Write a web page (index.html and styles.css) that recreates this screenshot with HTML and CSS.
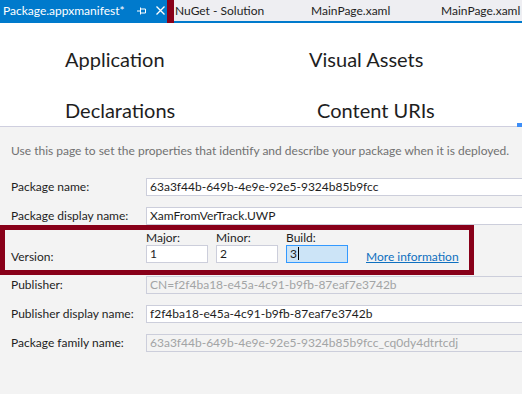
FILE: index.html
```html
<!DOCTYPE html>
<html lang="en">
<head>
  <meta charset="UTF-8" />
  <meta name="viewport" content="width=device-width, initial-scale=1.0"/>
  <title>Package.appxmanifest</title>
  <link rel="stylesheet" href="styles.css">
</head>
<body>
  <div class="page">
    <div class="tabbar">
      <div class="tab tab-active">
        <span class="tab-title">Package.appxmanifest*</span>
        <svg class="pin" width="9" height="8" viewBox="0 0 9 8">
          <path d="M0 4H3M3.5 0.5V7.5M3.5 2H8.5V6H3.5" fill="none" stroke="#fff" stroke-width="1"/>
        </svg>
        <svg class="close" width="9" height="9" viewBox="0 0 9 9">
          <path d="M0.5 0.5L8.5 8.5M8.5 0.5L0.5 8.5" stroke="#fff" stroke-width="1.3"/>
        </svg>
      </div>
      <div class="tab tab-nuget">NuGet - Solution</div>
      <div class="tab">MainPage.xaml</div>
      <div class="tab">MainPage.xaml</div>
    </div>
    <div class="mark-tab"></div>

    <div class="pivot">
      <div class="pivot-grid">
        <span>Application</span>
        <span>Visual Assets</span>
        <span>Declarations</span>
        <span class="pivot-shift">Content URIs</span>
      </div>
      <div class="pivot-dot"></div>
    </div>

    <div class="content">
      <p class="intro">Use this page to set the properties that identify and describe your package when it is deployed.</p>

      <div class="row">
        <label>Package name:</label>
        <div class="box">63a3f44b-649b-4e9e-92e5-9324b85b9fcc</div>
      </div>
      <div class="row row-tight">
        <label>Package display name:</label>
        <div class="box">XamFromVerTrack.UWP</div>
      </div>

      <div class="row version">
        <label class="version-label">Version:</label>
        <div class="part">
          <span class="part-label">Major:</span>
          <div class="box box-small">1</div>
        </div>
        <div class="part">
          <span class="part-label">Minor:</span>
          <div class="box box-small">2</div>
        </div>
        <div class="part">
          <span class="part-label">Build:</span>
          <div class="box box-small box-focus">3<span class="caret"></span></div>
        </div>
        <a class="more" href="#">More information</a>
      </div>

      <div class="row">
        <label>Publisher:</label>
        <div class="box box-disabled">CN=f2f4ba18-e45a-4c91-b9fb-87eaf7e3742b</div>
      </div>
      <div class="row">
        <label>Publisher display name:</label>
        <div class="box">f2f4ba18-e45a-4c91-b9fb-87eaf7e3742b</div>
      </div>
      <div class="row">
        <label>Package family name:</label>
        <div class="box box-disabled">63a3f44b-649b-4e9e-92e5-9324b85b9fcc_cq0dy4dtrtcdj</div>
      </div>
    </div>
  </div>
</body>
</html>
```

FILE: styles.css
```css
body { margin: 0; font-family: Lato, sans-serif; color: #1e1e1e; background: #f3f3f3; overflow: hidden; }
.page { position: relative; height: 394px; overflow: hidden; }

.tabbar { display: flex; height: 21px; background: #eeeef2; border-bottom: 2px solid #007acc; font-size: 12px; line-height: 21px; white-space: nowrap; overflow: hidden; }
.tab { flex: none; width: 130px; padding-left: 25px; box-sizing: border-box; }
.tab-active { display: flex; align-items: center; width: 167px; padding-left: 3px; background: #007acc; color: #fff; }
.tab-nuget { width: 119px; padding-left: 8px; }
.pin { margin-left: 12px; }
.close { margin-left: 10px; }
.mark-tab { position: absolute; left: -10px; top: -10px; width: 184px; height: 40px; border: 7px solid #880019; box-sizing: border-box; }

.pivot { position: relative; background: #fff; padding: 24px 0 4px 65px; border-bottom: 1px solid #cfcfdf; font-size: 20px; line-height: 24px; }
.pivot-grid { display: grid; grid-template-columns: 244px auto; row-gap: 27px; }
.pivot-shift { padding-left: 8px; }
.pivot-dot { position: absolute; right: 0; bottom: -1px; width: 5px; height: 4px; background: #3e8ef7; }

.content { padding-top: 16px; font-size: 12px; }
.intro { margin: 0 0 19px; padding-left: 11px; line-height: 16px; color: #717171; }

.row { display: flex; align-items: center; height: 18px; margin-bottom: 11px; padding-left: 11px; line-height: 18px; white-space: nowrap; }
.row label { flex: none; width: 135px; }
.row-tight { margin-bottom: 0; }

.box { flex: none; width: 400px; height: 18px; box-sizing: border-box; padding: 0 3px; border: 1px solid #cccedb; background: #fff; line-height: 16px; }
.box-disabled { background: #f3f3f3; color: #a2a4a5; }
.box-small { width: 62px; }
.box-focus { border-color: #3399ff; background: #cce4f7; }
.caret { display: inline-block; width: 1px; height: 13px; margin-left: 1px; vertical-align: -2px; background: #000; }

.version { width: 474px; height: 50px; box-sizing: border-box; margin-bottom: 1px; padding: 0 0 0 6px; border: 5px solid #880019; align-items: flex-start; }
.version-label { margin-top: 18px; }
.part { display: flex; flex-direction: column; margin-right: 8px; padding-top: 1px; }
.part-label { line-height: 14px; }
.more { margin: 18px 0 0 10px; color: #0e70c0; line-height: 18px; }
```
